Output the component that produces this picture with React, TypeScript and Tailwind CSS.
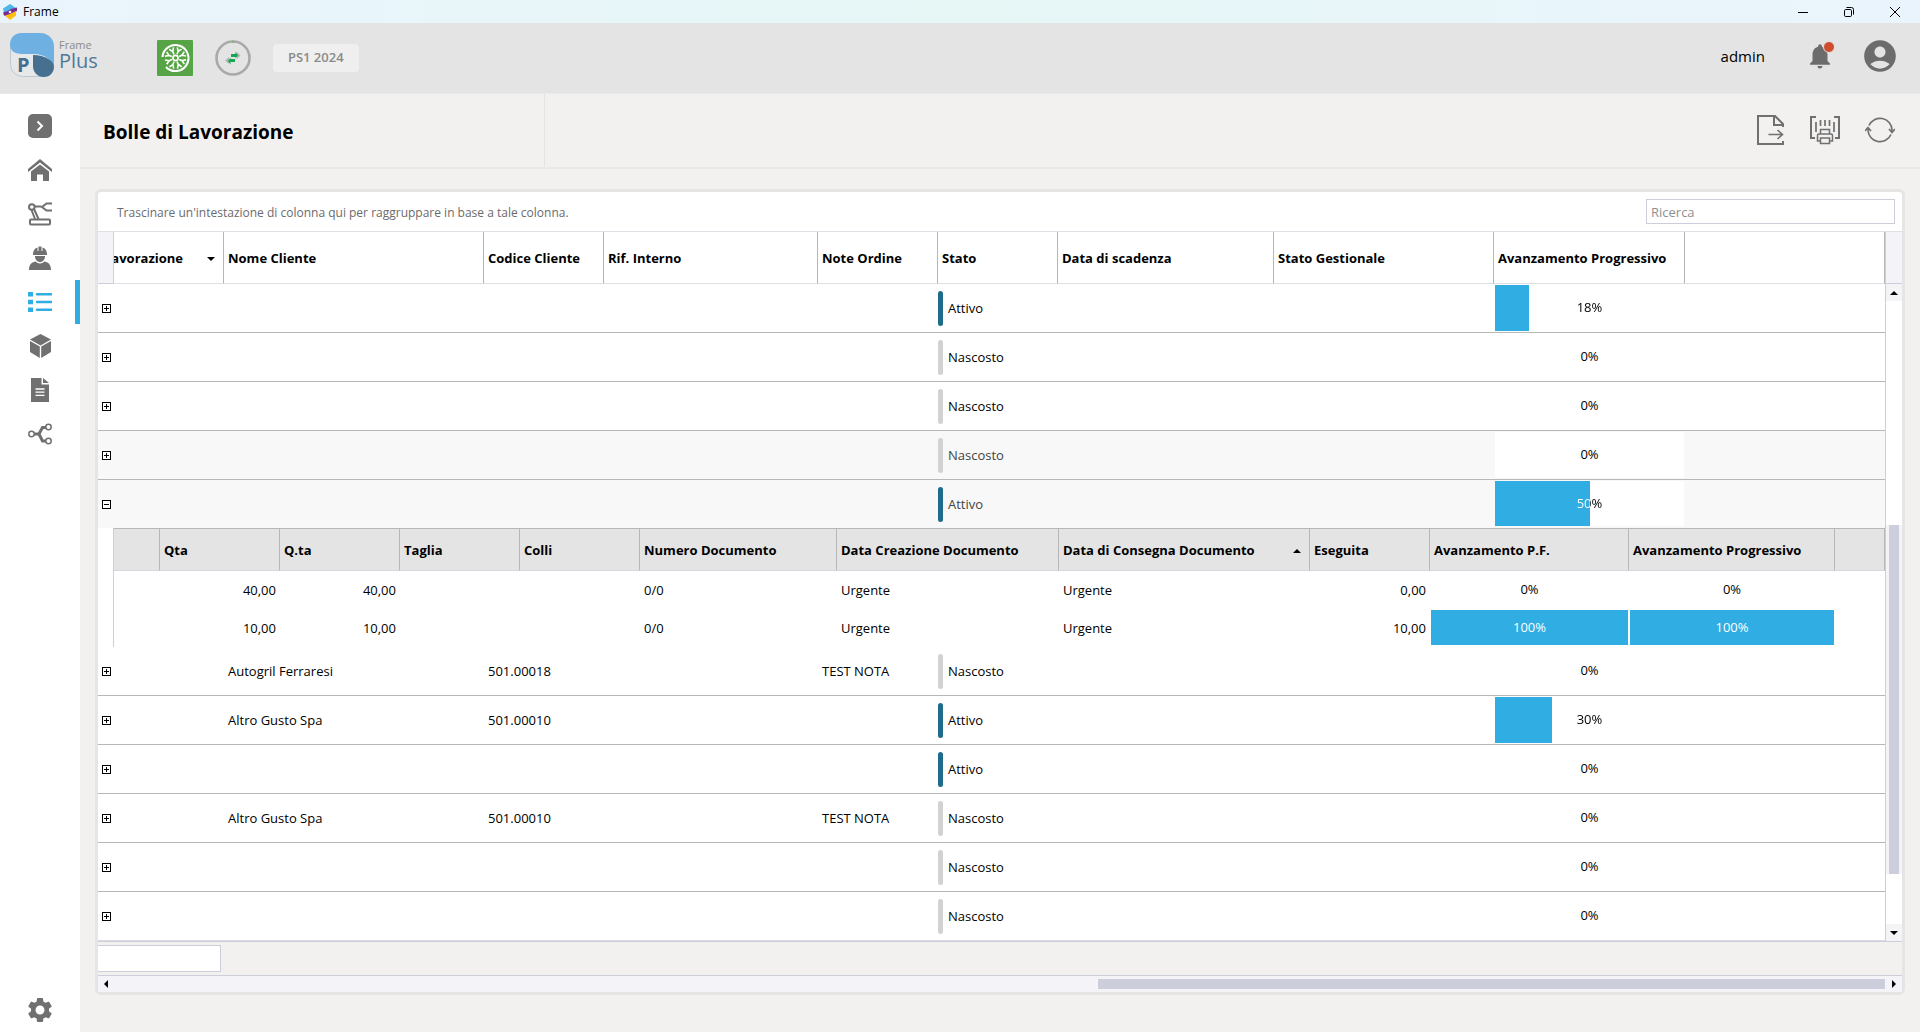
import { Fragment, type ReactNode } from "react";
import { MdAccountCircle, MdNotifications, MdSettings } from "react-icons/md";

type Row = {
  client?: string;
  code?: string;
  note?: string;
  state: "Attivo" | "Nascosto";
  progress: number;
  shaded?: boolean;
  open?: boolean;
};

const rows: Row[] = [
  { state: "Attivo", progress: 18 },
  { state: "Nascosto", progress: 0 },
  { state: "Nascosto", progress: 0 },
  { state: "Nascosto", progress: 0, shaded: true },
  { state: "Attivo", progress: 50, shaded: true, open: true },
  {
    client: "Autogril Ferraresi",
    code: "501.00018",
    note: "TEST NOTA",
    state: "Nascosto",
    progress: 0,
  },
  { client: "Altro Gusto Spa", code: "501.00010", state: "Attivo", progress: 30 },
  { state: "Attivo", progress: 0 },
  {
    client: "Altro Gusto Spa",
    code: "501.00010",
    note: "TEST NOTA",
    state: "Nascosto",
    progress: 0,
  },
  { state: "Nascosto", progress: 0 },
  { state: "Nascosto", progress: 0 },
];

const details = [
  { qty: "40,00", done: "0,00", progress: 0 },
  { qty: "10,00", done: "10,00", progress: 100 },
];

const columns = [
  { label: "Nome Cliente", width: "w-[260px]" },
  { label: "Codice Cliente", width: "w-[120px]" },
  { label: "Rif. Interno", width: "w-[214px]" },
  { label: "Note Ordine", width: "w-[120px]" },
  { label: "Stato", width: "w-[120px]" },
  { label: "Data di scadenza", width: "w-[216px]" },
  { label: "Stato Gestionale", width: "w-[220px]" },
  { label: "Avanzamento Progressivo", width: "w-[191px]" },
  { label: "", width: "" },
];

const detailColumns = [
  { label: "", width: "w-[46px]" },
  { label: "Qta", width: "w-[120px]" },
  { label: "Q.ta", width: "w-[120px]" },
  { label: "Taglia", width: "w-[120px]" },
  { label: "Colli", width: "w-[120px]" },
  { label: "Numero Documento", width: "w-[197px]" },
  { label: "Data Creazione Documento", width: "w-[222px]" },
  { label: "Data di Consegna Documento", width: "w-[251px]", sorted: true },
  { label: "Eseguita", width: "w-[120px]" },
  { label: "Avanzamento P.F.", width: "w-[199px]" },
  { label: "Avanzamento Progressivo", width: "w-[206px]" },
  { label: "", width: "" },
];

type Direction = "up" | "down" | "left" | "right";

const arrows: Record<Direction, string> = {
  up: "M0 6 4 2 8 6Z",
  down: "M0 2 4 6 8 2Z",
  left: "M6 0 2 4 6 8Z",
  right: "M2 0 6 4 2 8Z",
};

function Arrow({ to }: { to: Direction }) {
  return (
    <svg viewBox="0 0 8 8" className="size-2 shrink-0 fill-black">
      <path d={arrows[to]} />
    </svg>
  );
}

function NavIcon({ children }: { children: ReactNode }) {
  return (
    <svg viewBox="0 0 24 24" className="size-6" fill="currentColor">
      {children}
    </svg>
  );
}

const navItems: { label: string; active?: boolean; icon: ReactNode }[] = [
  {
    label: "Espandi menu",
    icon: (
      <>
        <rect width="24" height="24" rx="5" />
        <path d="m9.500 7.500 4.500 4.500-4.500 4.500" fill="none" stroke="#fff" strokeWidth="2" />
      </>
    ),
  },
  {
    label: "Home",
    icon: (
      <>
        <path d="M12 1 24 11v3L12 4.500 0 14v-3Z" />
        <path d="M12 6.500 21 13.500V23h-6v-6.500H9V23H3v-9.500Z" />
      </>
    ),
  },
  {
    label: "Macchine",
    icon: (
      <g fill="none" stroke="currentColor" strokeWidth="2">
        <rect x="2" y="17.500" width="20" height="5" rx="1" />
        <circle cx="3.800" cy="5" r="2.800" />
        <path d="M6.500 4.500h7M6 7l4.500 10M3.500 8 7 17" />
        <path d="M24 1.500h-5.500L14 5l4.500 3.500H24" />
      </g>
    ),
  },
  {
    label: "Operatori",
    icon: (
      <>
        <path d="M5 8c0-3.500 2-6 4.500-6.600V5h1V.5h3V5h1V1.400C17 2 19 4.500 19 8v1H5Z" />
        <path d="M7 10h10c0 3.500-2 6-5 6s-5-2.500-5-6Z" />
        <path d="M1 24c0-5 2-7.500 6.500-8.500 2.500 2.500 6.500 2.500 9 0C21 16.500 23 19 23 24Z" />
      </>
    ),
  },
  {
    label: "Bolle di Lavorazione",
    active: true,
    icon: (
      <>
        <path d="M0 2h5v4.500H0zM0 9.800h5v4.500H0zM0 17.500h5V22H0z" />
        <path
          d="M9 4.200h14M9 12h14M9 19.800h14"
          fill="none"
          stroke="currentColor"
          strokeWidth="2.600"
          strokeLinecap="round"
        />
      </>
    ),
  },
  {
    label: "Articoli",
    icon: (
      <>
        <path d="M12.500 0 23 5.500 12.500 11.500 2 5.500Z" />
        <path d="M2 7v11l9.800 6V12.500ZM23 7v11l-9.800 6V12.500Z" />
      </>
    ),
  },
  {
    label: "Documenti",
    icon: (
      <>
        <path d="M3 0h10.500v6.500H21V24H3Z" />
        <path d="M15 0 21 5h-6Z" />
        <path d="M7.500 11h9M7.500 14.200h9M7.500 17.400h9" stroke="#fff" strokeWidth="1.300" />
      </>
    ),
  },
  {
    label: "Flussi",
    icon: (
      <>
        <path
          d="M6 12h5M11 12 14.500 5.500h3.500M11 12 14.500 19h3.500"
          fill="none"
          stroke="currentColor"
          strokeWidth="3"
        />
        <g fill="#fff" stroke="currentColor" strokeWidth="1.500">
          <circle cx="3.500" cy="12" r="2.700" />
          <circle cx="20.500" cy="5" r="2.700" />
          <circle cx="20.500" cy="19" r="2.700" />
        </g>
      </>
    ),
  },
];

function TitleBar() {
  return (
    <div className="flex h-[23px] items-center bg-linear-to-r from-[#eaf4fc] via-[#e6f7f6] to-[#eaf4fc] pr-0.5 pl-[3px] text-xs">
      <svg viewBox="0 0 14 16" className="h-4 w-3.5">
        <path d="M7 0 13 4v4L9.500 6 7 8.500 1 9 0 4.500Z" fill="#4db7ea" />
        <path d="M0 8.500 5 7l3-2 6-1.500V7l-6 3-4 2.500-3-1Z" fill="#7b2a90" />
        <path d="M2 11.500 7 10l6-3v4.500L7 16Z" fill="#fdc010" />
        <circle cx="7" cy="8" r="1.300" fill="#fff" />
      </svg>
      <span className="ml-1.5">Frame</span>
      <div className="ml-auto flex h-full">
        <button aria-label="Riduci a icona" className="grid w-[46px] place-items-center">
          <svg viewBox="0 0 10 10" className="size-2.5 stroke-black">
            <path d="M0 5.500h10" />
          </svg>
        </button>
        <button aria-label="Ripristina" className="grid w-[46px] place-items-center">
          <svg viewBox="0 0 10 10" className="size-2.5 fill-none stroke-black">
            <rect x=".5" y="2.500" width="7" height="7" rx="1.200" />
            <path d="M2.500.5h5a2 2 0 0 1 2 2v5" />
          </svg>
        </button>
        <button aria-label="Chiudi" className="grid w-[46px] place-items-center">
          <svg viewBox="0 0 10 10" className="size-2.5 stroke-black">
            <path d="m0 0 10 10M10 0 0 10" />
          </svg>
        </button>
      </div>
    </div>
  );
}

function Logo() {
  return (
    <div className="flex items-center gap-[5px] pb-1.5">
      <svg viewBox="0 0 44 44" className="size-11">
        <rect x=".5" y=".5" width="43" height="43" rx="12" fill="#e6e8ea" stroke="#bcc8d1" />
        <path
          d="M0 12C0 4 5 0 12 0h17c9 0 15 6 15 14v20C41 26 34 21 24 21H12C4 21 0 17 0 12Z"
          fill="#6fb0e3"
        />
        <path d="M23 22c12 0 21 6 21 12 0 5-4 10-10 10-7 0-11-5-11-11Z" fill="#476f90" />
        <text
          x="7"
          y="39"
          fill="#476f90"
          className="font-['Open_Sans',sans-serif] text-[20px] font-bold"
        >
          P
        </text>
      </svg>
      <div className="flex flex-col">
        <span className="text-[11px] leading-3 text-[#8a8a8a]">Frame</span>
        <span className="text-xl leading-5 text-[#4f7898]">Plus</span>
      </div>
    </div>
  );
}

const spokes = [0, 45, 90, 135, 180, 225, 270, 315];

function Header() {
  return (
    <header className="flex h-[71px] items-center border-b border-[#eaeaea] bg-[#e4e4e4] pr-[21px] pl-2.5">
      <Logo />
      <button aria-label="Produzione" className="ml-[59px]">
        <svg viewBox="0 0 36 36" className="size-9" fill="none" stroke="#fff" strokeWidth="2">
          <rect width="36" height="36" rx="1" fill="#57a447" stroke="none" />
          <path d="M5.500 17A13 13 0 1 1 9 27" />
          <circle cx="18.500" cy="18" r="2.600" strokeWidth="1.600" />
          {spokes.map((angle) => (
            <path
              key={angle}
              d="M18.500 14v-3.500M16.200 7.500l2.300 3.500 2.300-3.500"
              strokeWidth="1.600"
              transform={`rotate(${angle + 22} 18.500 18)`}
            />
          ))}
        </svg>
      </button>
      <button aria-label="Sincronizzazione" className="ml-[22px]">
        <svg viewBox="0 0 36 36" className="size-9">
          <circle cx="18" cy="18" r="16.500" fill="none" stroke="#a9a9a9" strokeWidth="2.600" />
          <path d="M18 .5v2.500" stroke="#5cb85c" />
          <path d="m10 20.500 4-3.500v7ZM25.500 15.500 22 12v7Z" fill="#b5b5b5" />
          <path
            d="M16 14h4.500v-2.500L23 15.500l-2.500 3V17H16ZM20 19h-4.500v-1.500L13 21l2.500 3.500V22H20Z"
            fill="#17a651"
          />
        </svg>
      </button>
      <button className="ml-[22px] h-7 rounded-sm bg-[#efefef] px-[15px] text-[13px] font-semibold text-[#8a8a8a]">
        PS1 2024
      </button>

      <div className="ml-auto flex items-center pb-1">
        <span className="text-[15px]">admin</span>
        <button aria-label="Notifiche" className="relative ml-10 text-[#6c6c6c]">
          <MdNotifications className="size-[30px]" />
          <span className="absolute top-0 right-0 size-3 rounded-full border border-[#e4e4e4] bg-[#cf4d2f]" />
        </button>
        <button aria-label="Profilo" className="ml-[26px] text-[#6c6c6c]">
          <MdAccountCircle className="size-[38px]" />
        </button>
      </div>
    </header>
  );
}

function Sidebar() {
  return (
    <nav className="flex w-20 shrink-0 flex-col bg-white pt-2.5 text-[#707070]">
      {navItems.map((item) => (
        <button
          key={item.label}
          aria-label={item.label}
          className={
            item.active
              ? "grid h-11 place-items-center border-r-5 border-[#30ade3] pl-[5px] text-[#30ade3]"
              : "grid h-11 place-items-center"
          }
        >
          <NavIcon>{item.icon}</NavIcon>
        </button>
      ))}
      <button aria-label="Impostazioni" className="mt-auto grid h-11 place-items-center">
        <MdSettings className="size-[30px]" />
      </button>
    </nav>
  );
}

function PageHeading() {
  return (
    <div className="flex h-[75px] border-b-2 border-[#e9e9e9]">
      <div className="flex w-[465px] items-center border-r border-[#e4e4e4] pt-1 pl-[23px]">
        <h1 className="text-[19px] font-bold">Bolle di Lavorazione</h1>
      </div>
      <div className="ml-auto flex pr-[13px] pb-0.5 text-[#707070]">
        <button aria-label="Esporta" className="grid w-[55px] place-items-center">
          <svg viewBox="0 0 30 30" className="size-[30px]" fill="none" stroke="currentColor">
            <path d="M28 26v3H3V1h17l8 8v3" strokeWidth="2" />
            <path d="M19 1v9h9" strokeWidth="2" />
            <path d="M13.500 19.500H27M22.500 15l5 4.500-5 4.500" strokeWidth="1.600" />
          </svg>
        </button>
        <button aria-label="Stampa etichette" className="grid w-[55px] place-items-center">
          <svg viewBox="0 0 30 30" className="size-[30px]" fill="none" stroke="currentColor">
            <path d="M6 2H1v21h4M24 2h5v21h-4" strokeWidth="2" />
            <path d="M6 7v10M10.500 5v6M15 5v6M19.500 5v6M24 7v10" strokeWidth="1.700" />
            <g strokeWidth="1.500">
              <path d="M10.500 19v-4.500h9V19" />
              <path d="M10 26H7.500v-5.500a1.500 1.500 0 0 1 1.500-1.500h12a1.500 1.500 0 0 1 1.500 1.500V26H20" />
              <rect x="10.500" y="23" width="9" height="5.500" />
            </g>
          </svg>
        </button>
        <button aria-label="Aggiorna" className="grid w-[55px] place-items-center">
          <svg
            viewBox="0 0 30 30"
            className="size-[30px]"
            fill="none"
            stroke="currentColor"
            strokeWidth="1.700"
          >
            <path d="M4 10.500A12 12 0 0 1 27 15v2M26 19.500A12 12 0 0 1 3 15v-2" />
            <path d="m24 14 3 3.500 3-3.500M0 16l3-3.500L6 16" />
          </svg>
        </button>
      </div>
    </div>
  );
}

type ProgressProps = { value: number; label: string; height: string };

function ProgressCell({ value, label, height }: ProgressProps) {
  const partial = value > 0 && value < 100;
  const color = partial
    ? "bg-clip-text text-transparent"
    : value === 100
      ? "text-white"
      : "text-black";
  return (
    <td className="border-b border-inherit p-px">
      <div
        role="progressbar"
        aria-label={label}
        aria-valuenow={value}
        className={`relative bg-white ${height}`}
      >
        <div className="h-full bg-[#30ade3]" style={{ width: `${value}%` }} />
        {/* the label turns white where the bar runs under it */}
        <div
          className={`absolute inset-0 flex items-center justify-center ${color}`}
          style={
            partial
              ? { backgroundImage: `linear-gradient(90deg, #fff ${value}%, #000 ${value}%)` }
              : undefined
          }
        >
          {value}%
        </div>
      </div>
    </td>
  );
}

function DetailTable() {
  return (
    <table className="w-full table-fixed border-separate border-spacing-0">
      <thead>
        <tr className="h-[43px]">
          {detailColumns.map((col, i) => (
            <th
              key={i}
              className={`${col.width} border-t border-r border-b border-t-[#b7b7b7] border-r-[#b7b7b7] border-b-[#d5d6df] bg-[#e4e4e4] px-1 pt-0.5 text-left font-bold whitespace-nowrap`}
            >
              <div className="flex items-center justify-between pr-1">
                {col.label}
                {col.sorted && <Arrow to="up" />}
              </div>
            </th>
          ))}
        </tr>
      </thead>
      <tbody>
        {details.map((d) => (
          <tr key={d.qty} className="h-[38px] border-transparent">
            <td />
            <td className="px-1 pt-0.5 text-right">{d.qty}</td>
            <td className="px-1 pt-0.5 text-right">{d.qty}</td>
            <td />
            <td />
            <td className="px-1 pt-0.5">0/0</td>
            <td className="px-1 pt-0.5">Urgente</td>
            <td className="px-1 pt-0.5">Urgente</td>
            <td className="px-1 pt-0.5 text-right">{d.done}</td>
            <ProgressCell value={d.progress} label="Avanzamento P.F." height="h-[35px]" />
            <ProgressCell value={d.progress} label="Avanzamento Progressivo" height="h-[35px]" />
            <td />
          </tr>
        ))}
      </tbody>
    </table>
  );
}

function ExpandButton({ open }: { open?: boolean }) {
  return (
    <button aria-label={open ? "Comprimi" : "Espandi"} aria-expanded={!!open} className="block">
      <svg viewBox="0 0 9 9" className="size-[9px] fill-white stroke-black">
        <rect x=".5" y=".5" width="8" height="8" />
        <path d={open ? "M2 4.500h5" : "M2 4.500h5M4.500 2v5"} />
      </svg>
    </button>
  );
}

function OrdersTable() {
  return (
    <table className="min-w-0 flex-1 table-fixed border-separate border-spacing-0">
      <thead>
        <tr className="h-[52px]">
          <th className="w-4 border-r border-b border-[#cccedb] bg-[#f4f4f8]" />
          <th className="w-[110px] overflow-hidden border-r border-b border-r-[#b7b7b7] border-b-[#dfe0e6] pt-0.5 pr-2">
            <div className="flex items-center justify-between">
              <span className="flex w-[69px] justify-end overflow-hidden">Lavorazione</span>
              <Arrow to="down" />
            </div>
          </th>
          {columns.map((col, i) => (
            <th
              key={i}
              className={`${col.width} border-r border-b border-r-[#b7b7b7] border-b-[#dfe0e6] px-1 pt-0.5 text-left font-bold whitespace-nowrap`}
            >
              {col.label}
            </th>
          ))}
        </tr>
      </thead>
      <tbody>
        {rows.map((row, i) => {
          const line = row.open ? "" : "border-b border-inherit";
          return (
            <Fragment key={i}>
              <tr
                className={`${row.open ? "h-12 border-transparent" : "h-[49px] border-[#b7b7b7]"} ${row.shaded ? "bg-[#f8f8f8] text-[#444]" : ""} last:border-[#dcdcdf]`}
              >
                <td className={`${line} pl-1`}>
                  <ExpandButton open={row.open} />
                </td>
                <td className={line} />
                <td className={`${line} px-1 pt-0.5`}>{row.client}</td>
                <td className={`${line} px-1 pt-0.5`}>{row.code}</td>
                <td className={line} />
                <td className={`${line} px-1 pt-0.5`}>{row.note}</td>
                <td className={line}>
                  <div className="flex items-center gap-[5px]">
                    <span
                      className={`h-[35px] w-[5px] rounded-sm ${row.state === "Attivo" ? "bg-[#1f6b8a]" : "bg-[#d2d2d2]"}`}
                    />
                    <span className="pt-0.5">{row.state}</span>
                  </div>
                </td>
                <td className={line} />
                <td className={line} />
                <ProgressCell
                  value={row.progress}
                  label="Avanzamento Progressivo"
                  height={row.open ? "h-[45px]" : "h-[46px]"}
                />
                <td className={line} />
              </tr>
              {row.open && (
                <tr>
                  <td className="border-r border-[#cccedb]" />
                  <td colSpan={10}>
                    <DetailTable />
                  </td>
                </tr>
              )}
            </Fragment>
          );
        })}
      </tbody>
    </table>
  );
}

function VerticalScrollbar() {
  return (
    <div className="flex w-[17px] shrink-0 flex-col border-l border-[#cccedb]">
      <div className="h-[52px] border-b border-[#cccedb] bg-[#f4f4f8]" />
      <button aria-label="Scorri su" className="grid h-[17px] place-items-center bg-[#f4f4f6]">
        <Arrow to="up" />
      </button>
      <div className="h-56" />
      <div className="flex-1 bg-[#f4f4f8] px-[3px]">
        <div className="h-full bg-[#cccedb]" />
      </div>
      <div className="h-[50px]" />
      <button aria-label="Scorri giù" className="grid h-[17px] place-items-center bg-[#f4f4f6]">
        <Arrow to="down" />
      </button>
    </div>
  );
}

function HorizontalScrollbar() {
  return (
    <div className="flex h-[17px] border-t border-[#cccedb] bg-[#f4f4f8]">
      <button aria-label="Scorri a sinistra" className="grid w-4 place-items-center">
        <Arrow to="left" />
      </button>
      <div className="flex flex-1 py-[3px]">
        <div className="flex-[5]" />
        <div className="flex-[4] bg-[#cccedb]" />
      </div>
      <button aria-label="Scorri a destra" className="grid w-[17px] place-items-center">
        <Arrow to="right" />
      </button>
    </div>
  );
}

export default function App() {
  return (
    <div className="flex min-h-screen flex-col bg-[#f2f1f0] font-['Open_Sans',sans-serif] text-[13px] text-black">
      <TitleBar />
      <Header />
      <div className="flex flex-1">
        <Sidebar />
        <main className="min-w-0 flex-1">
          <PageHeading />
          <section className="mx-[15px] mt-5 rounded-md border-3 border-[#e5e5e5] bg-white">
            <div className="flex h-10 items-center justify-between border-b border-[#dfe0e6] pr-[7px] pl-[19px]">
              <p className="pt-0.5 text-xs text-[#6b6b6b]">
                Trascinare un'intestazione di colonna qui per raggruppare in base a tale colonna.
              </p>
              <input
                type="search"
                aria-label="Ricerca"
                placeholder="Ricerca"
                className="h-[25px] w-[249px] border border-[#cccedb] px-1 placeholder:text-[#8f8f8f]"
              />
            </div>
            <div className="flex">
              <OrdersTable />
              <VerticalScrollbar />
            </div>
            <div className="h-[34px] border-t border-[#cccedb] bg-[#f2f1f0] pt-[3px]">
              <input
                type="text"
                aria-label="Totale"
                className="block h-[27px] w-[123px] border border-l-0 border-[#cccedb] bg-white px-1"
              />
            </div>
            <HorizontalScrollbar />
          </section>
        </main>
      </div>
    </div>
  );
}
